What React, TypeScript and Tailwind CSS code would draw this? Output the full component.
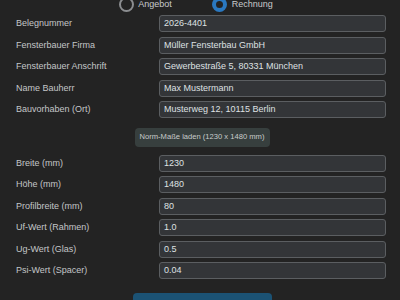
import React from "react";

const top = [
  ["Belegnummer", "2026-4401"],
  ["Fensterbauer Firma", "Müller Fensterbau GmbH"],
  ["Fensterbauer Anschrift", "Gewerbestraße 5, 80331 München"],
  ["Name Bauherr", "Max Mustermann"],
  ["Bauvorhaben (Ort)", "Musterweg 12, 10115 Berlin"],
];

const bottom = [
  ["Breite (mm)", "1230"],
  ["Höhe (mm)", "1480"],
  ["Profilbreite (mm)", "80"],
  ["Uf-Wert (Rahmen)", "1.0"],
  ["Ug-Wert (Glas)", "0.5"],
  ["Psi-Wert (Spacer)", "0.04"],
];

function Row({ label, value }: { label: string; value: string }) {
  return (
    <div className="flex items-center h-[17px]">
      <div className="w-[143px] shrink-0 text-[9px] leading-none text-[#c4c6c8]">{label}</div>
      <div className="flex-1 h-[17px] rounded-[3px] border border-[#5b5e61] bg-[#333538] flex items-center pl-[4px] text-[9px] leading-none text-[#dfe1e3]">
        {value}
      </div>
    </div>
  );
}

export default function App() {
  return (
    <div
      className="w-[400px] h-[300px] overflow-hidden bg-[#232323]"
      style={{ fontFamily: '"Liberation Sans", Arial, sans-serif' }}
    >
      <div className="-mt-[3px] pl-[16px] pr-[14px]">
        <div className="h-[15px] flex items-center justify-center pr-[10px]">
          <div className="flex items-center">
            <div className="w-[15px] h-[15px] rounded-full border-[2px] border-[#8b8d90] bg-[#232323]" />
            <span className="ml-[4px] text-[9px] leading-none text-[#c8cacc]">Angebot</span>
          </div>
          <div className="flex items-center ml-[40px]">
            <div className="w-[15px] h-[15px] rounded-full border-[4px] border-[#2a78c0] bg-[#232323]" />
            <span className="ml-[5px] text-[9px] leading-none text-[#c8cacc]">Rechnung</span>
          </div>
        </div>
        <div className="mt-[3px] flex flex-col gap-[4.5px]">
          {top.map(([l, v]) => (
            <Row key={l} label={l} value={v} />
          ))}
        </div>
        <div className="mt-[9.5px] flex justify-center pl-[2px]">
          <div className="w-[135px] h-[19.5px] rounded-[4px] bg-[#373f3e] flex items-center justify-center text-[7.6px] leading-none text-[#c8cccb]">
            Norm-Maße laden (1230 x 1480 mm)
          </div>
        </div>
        <div className="mt-[7.5px] flex flex-col gap-[4.5px]">
          {bottom.map(([l, v]) => (
            <Row key={l} label={l} value={v} />
          ))}
        </div>
        <div className="mt-[13.7px] flex justify-center pl-[2px]">
          <div className="w-[139px] h-[24px] rounded-[4px] bg-[#1b5274]" />
        </div>
      </div>
    </div>
  );
}
